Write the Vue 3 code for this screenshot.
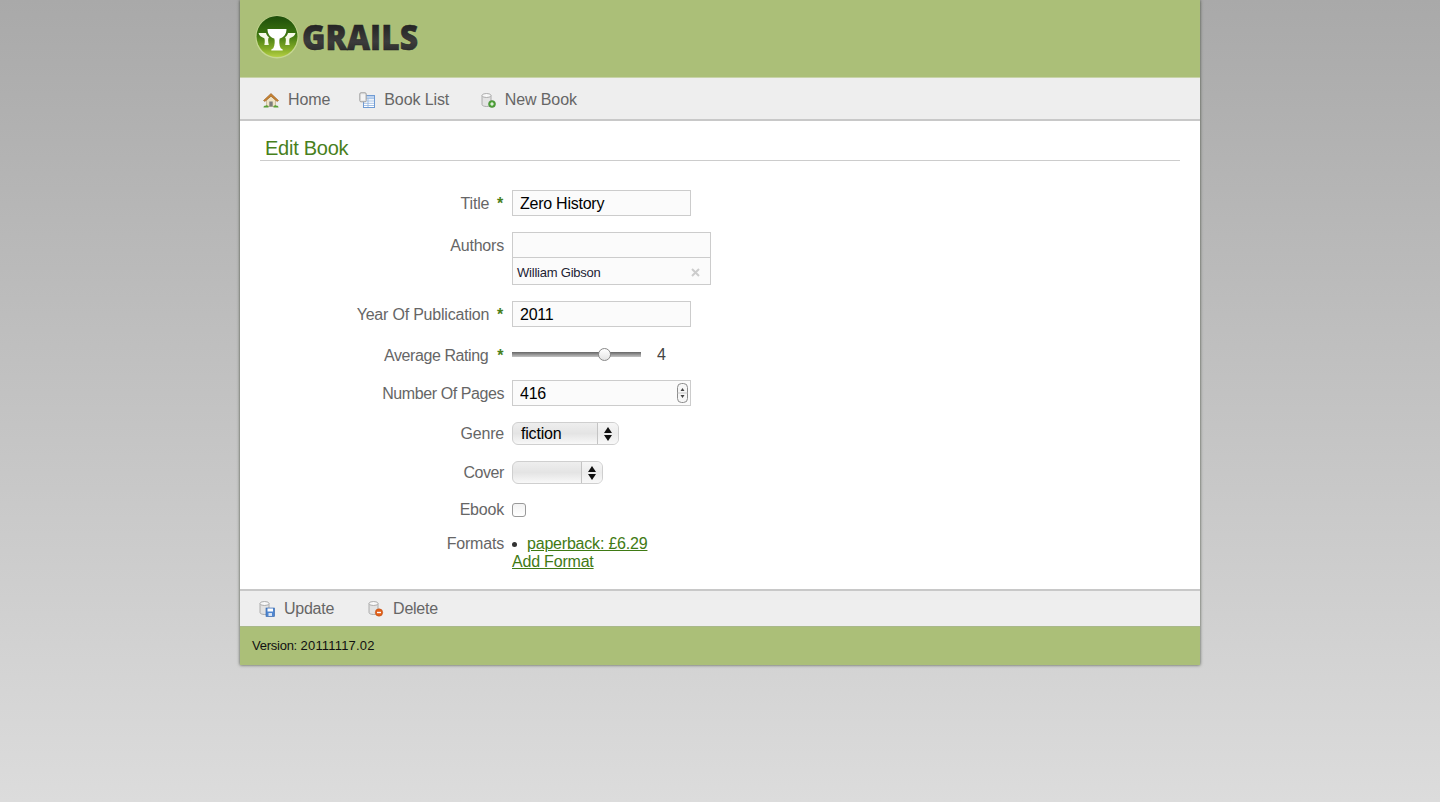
<template>
  <div class="page">
    <div class="sheet">
      <header class="masthead">
        <svg class="logo" width="190" height="44" viewBox="0 0 190 44" role="img" aria-label="Grails">
          <defs>
            <linearGradient id="ball" x1="0" y1="0" x2="0" y2="1">
              <stop offset="0" stop-color="#1d4d0a" />
              <stop offset="0.45" stop-color="#3c7410" />
              <stop offset="0.8" stop-color="#83ab26" />
              <stop offset="1" stop-color="#b4cf45" />
            </linearGradient>
            <linearGradient id="word" x1="0" y1="0" x2="0" y2="1">
              <stop offset="0" stop-color="#111" />
              <stop offset="0.6" stop-color="#3c3c3c" />
              <stop offset="1" stop-color="#1e1e1e" />
            </linearGradient>
          </defs>
          <circle cx="22" cy="22" r="21.500" fill="#c6d792" />
          <circle cx="22" cy="21.500" r="20.500" fill="url(#ball)" />
          <path d="M12.500 14h19c0 5-2.500 8.200-6.800 9.500-.7 2-.6 6.500 1 9.800l2 1.200v1H16.300v-1l2-1.200c1.600-3.300 1.700-7.800 1-9.800-4.300-1.300-6.800-4.500-6.800-9.500z" fill="#fff" />
          <path d="M3.500 18H11c.5 2 1.500 3.200 3 4.200l-.5.800c-.6 1-.4 4 .3 7H9.300c.7-3 .6-5.500 0-6.800-3-1-5.300-2.700-5.800-5.200z" fill="#f6f9e8" />
          <path d="M40.500 18H33c-.5 2-1.500 3.200-3 4.200l.5.800c.6 1 .4 4-.3 7h4.500c-.7-3-.6-5.500 0-6.800 3-1 5.300-2.700 5.800-5.200z" fill="#f6f9e8" />
          <text class="logo-word" x="47" y="35" textLength="116" lengthAdjust="spacingAndGlyphs" fill="url(#word)" stroke="#222" stroke-width=".5">GRAILS</text>
        </svg>
      </header>

      <nav class="bar nav-bar">
        <a v-for="item in navItems" :key="item.label" class="bar-link">
          <svg class="icon" width="16" height="16" viewBox="0 0 16 16">
            <template v-if="item.icon === 'home'">
              <path d="M3.500 8 8 4l4.500 4v6.500h-9z" fill="#efe3c6" stroke="#a8926a" stroke-width=".5" />
              <path d="M.5 8.500 8 1.500l7.500 7-1.300 1L8 4.200 1.800 9.500z" fill="#c9822f" stroke="#94602a" stroke-width=".6" />
              <rect x="6.300" y="9.500" width="3.400" height="5" fill="#7d7d7d" />
              <path d="M.5 15.500c0-1.500 1-2 2-1.800.6-.8 2-.6 3 .3v1.500zM15.500 15.500c0-1.500-1-2-2-1.800-.6-.8-2-.6-3 .3v1.500z" fill="#5aa038" />
            </template>
            <template v-else-if="item.icon === 'list'">
              <rect x="4.500" y="3.500" width="11" height="12" fill="#fff" stroke="#6f9bd4" />
              <rect x="5" y="4" width="10" height="2.500" fill="#bdd2ee" />
              <path d="M5 6.700h10M5 9h10M5 11.300h10M5 13.500h10M9 6.500v8.500" stroke="#8fb2de" stroke-width=".8" />
              <rect x=".8" y=".8" width="6.400" height="9" rx="1.200" fill="#e8e8e8" stroke="#a0a0a0" />
              <path d="M3 2.500v5.500M5 2.500v5.500" stroke="#fff" />
            </template>
            <template v-else>
              <path d="M2 3.500v9c0 1.200 2.200 2 4.500 2s4.500-.8 4.500-2v-9z" fill="#e3e3e3" stroke="#9c9c9c" stroke-width=".8" />
              <ellipse cx="6.500" cy="3.500" rx="4.500" ry="2" fill="#f8f8f8" stroke="#9c9c9c" stroke-width=".8" />
              <circle cx="12" cy="12" r="3.500" fill="#4fa33a" stroke="#3c7f2a" stroke-width=".5" />
              <path d="M10.200 12h3.600M12 10.200v3.600" stroke="#fff" stroke-width="1.200" />
            </template>
          </svg>
          <span>{{ item.label }}</span>
        </a>
      </nav>

      <main class="content">
        <h1 class="title">Edit Book</h1>

        <form class="book-form" @submit.prevent>
          <label class="field-label">Title <b class="req">*</b></label>
          <div><input class="text-input" type="text" value="Zero History" /></div>

          <label class="field-label">Authors</label>
          <div class="authors">
            <input class="authors-input" type="text" />
            <div class="author-chip">
              <span>William Gibson</span>
              <svg width="9" height="9" viewBox="0 0 9 9"><path d="M1 1l7 7M8 1 1 8" stroke="#ccc" stroke-width="2" /></svg>
            </div>
          </div>

          <label class="field-label">Year Of Publication <b class="req">*</b></label>
          <div><input class="text-input" type="text" value="2011" /></div>

          <label class="field-label tight rating-label">Average Rating <b class="req">*</b></label>
          <div class="rating">
            <div class="slider"><span class="knob"></span></div>
            <output class="rating-value">4</output>
          </div>

          <label class="field-label tight">Number Of Pages</label>
          <div class="number-wrap">
            <input class="text-input" type="text" value="416" />
            <span class="stepper">
              <svg width="11" height="20" viewBox="0 0 11 20">
                <rect x=".5" y=".5" width="10" height="19" rx="4" fill="#f6f6f6" stroke="#8c8c8c" />
                <path d="M.5 10h10" stroke="#c8c8c8" />
                <path d="M5.500 5 7.500 8h-4zM5.500 15l2-3h-4z" fill="#444" />
              </svg>
            </span>
          </div>

          <label class="field-label select-label">Genre</label>
          <div class="select-box genre">
            <span class="select-text">fiction</span>
            <span class="select-arrows"><i class="up"></i><i class="down"></i></span>
          </div>

          <label class="field-label select-label tight">Cover</label>
          <div class="select-box cover">
            <span class="select-text"></span>
            <span class="select-arrows"><i class="up"></i><i class="down"></i></span>
          </div>

          <label class="field-label ebook-label">Ebook</label>
          <div class="ebook"><span class="checkbox"></span></div>

          <label class="field-label formats-label">Formats</label>
          <div class="formats">
            <div class="format-item"><span class="dot"></span><a class="link">paperback: £6.29</a></div>
            <a class="link">Add Format</a>
          </div>
        </form>
      </main>

      <div class="bar action-bar">
        <a class="bar-link">
          <svg class="icon" width="16" height="16" viewBox="0 0 16 16">
            <path d="M1 2.500v9c0 1.200 2.200 2 4.500 2s4.500-.8 4.500-2v-9z" fill="#e3e3e3" stroke="#9c9c9c" stroke-width=".8" />
            <ellipse cx="5.500" cy="2.500" rx="4.500" ry="2" fill="#f8f8f8" stroke="#9c9c9c" stroke-width=".8" />
            <rect x="7" y="7" width="8.500" height="8.500" fill="#4f86d0" stroke="#2f62a8" stroke-width=".6" />
            <rect x="8.500" y="7.500" width="5.500" height="3" fill="#fff" />
            <rect x="9.500" y="12" width="3.500" height="3" fill="#d8e4f4" />
          </svg>
          <span>Update</span>
        </a>
        <a class="bar-link">
          <svg class="icon" width="16" height="16" viewBox="0 0 16 16">
            <path d="M1 2.500v9c0 1.200 2.200 2 4.500 2s4.500-.8 4.500-2v-9z" fill="#e3e3e3" stroke="#9c9c9c" stroke-width=".8" />
            <ellipse cx="5.500" cy="2.500" rx="4.500" ry="2" fill="#f8f8f8" stroke="#9c9c9c" stroke-width=".8" />
            <circle cx="11" cy="11.500" r="3.700" fill="#e2601a" stroke="#b84a10" stroke-width=".5" />
            <path d="M9 11.500h4" stroke="#fff" stroke-width="1.400" />
          </svg>
          <span>Delete</span>
        </a>
      </div>

      <footer class="foot"><span class="foot-label">Version:</span> <span class="foot-number">20111117.02</span></footer>
    </div>
  </div>
</template>

<script setup>
const navItems = [
  { label: 'Home', icon: 'home' },
  { label: 'Book List', icon: 'list' },
  { label: 'New Book', icon: 'add' }
]
</script>

<style>
html,
body {
  margin: 0;
  height: 100%;
}
</style>

<style scoped>
.page {
  min-height: 802px;
  background: linear-gradient(#a9a9a9, #dcdcdc);
  font-family: "Liberation Sans", Arial, sans-serif;
  color: #666;
  overflow: hidden;
}

.sheet {
  width: 960px;
  margin: 0 auto;
  background: #fff;
  box-shadow: 0 0 3px rgba(40, 50, 30, 0.8);
}

.masthead {
  height: 77px;
  box-sizing: border-box;
  padding: 15px 0 0 15px;
  background: #abbf78;
}

.logo {
  display: block;
  overflow: visible;
}

.logo-word {
  font-family: "Open Sans", sans-serif;
  font-weight: 800;
  font-size: 36px;
}

.bar {
  display: flex;
  align-items: center;
  background: #eee;
  font-size: 16px;
}

.nav-bar {
  height: 44px;
  box-sizing: border-box;
  padding: 2px 0 0 23px;
  gap: 29px;
  letter-spacing: -0.1px;
  border-top: 1px solid #c8d3a8;
  border-bottom: 2px solid #c8c8c8;
}

.nav-bar .bar-link:last-child {
  margin-left: 1.500px;
}

.action-bar {
  height: 37px;
  box-sizing: border-box;
  padding-left: 19px;
  gap: 34px;
  letter-spacing: -0.25px;
  border-top: 2px solid #c8c8c8;
}

.bar-link {
  display: flex;
  align-items: center;
  gap: 9px;
  color: #666;
}

.icon {
  flex: none;
}

.content {
  padding: 16px 20px 18px;
}

.title {
  margin: 0 0 29px;
  padding: 0 0 0 5px;
  font-size: 20px;
  line-height: 23px;
  font-weight: normal;
  letter-spacing: -0.25px;
  color: #48801c;
  border-bottom: 1px solid #ccc;
}

.book-form {
  display: grid;
  grid-template-columns: 244px 1fr;
  column-gap: 8px;
  row-gap: 16px;
  font-size: 16px;
  letter-spacing: -0.2px;
}

.field-label {
  height: 18px;
  box-sizing: border-box;
  padding-top: 4px;
  text-align: right;
  line-height: 20px;
}

.tight {
  letter-spacing: -0.42px;
}

.rating-label {
  padding-top: 3px;
}

.select-label {
  padding-top: 2px;
}

.ebook-label {
  padding-top: 1px;
  line-height: 18px;
}

.formats-label {
  padding-top: 0;
  line-height: 18px;
}

.req {
  display: inline-block;
  margin: 0 1px 0 3.500px;
  font-weight: bold;
  color: #48801c;
}

.tight .req {
  margin-left: 5px;
}

.text-input {
  display: block;
  width: 179px;
  height: 26px;
  box-sizing: border-box;
  padding: 2px 7px 0;
  border: 1px solid #ccc;
  border-radius: 0;
  outline: none;
  background: #fbfbfb;
  font: inherit;
  letter-spacing: -0.25px;
  color: #000;
}

.authors {
  width: 199px;
  box-sizing: border-box;
  border: 1px solid #ccc;
  background: #fbfbfb;
}

.authors-input {
  display: block;
  width: 100%;
  height: 25px;
  box-sizing: border-box;
  border: 0;
  border-bottom: 1px solid #ccc;
  outline: none;
  background: transparent;
}

.author-chip {
  display: flex;
  align-items: center;
  justify-content: space-between;
  height: 26px;
  padding: 2px 10px 0 4px;
  box-sizing: border-box;
  font-size: 13px;
  letter-spacing: -0.22px;
  color: #223;
}

.rating {
  display: flex;
  align-items: center;
  height: 21px;
  padding-top: 1px;
  box-sizing: border-box;
}

.slider {
  position: relative;
  width: 129px;
  height: 5px;
  background: linear-gradient(#666, #c4c4c4);
}

.knob {
  position: absolute;
  left: 86px;
  top: -4px;
  width: 11px;
  height: 11px;
  border: 1px solid #888;
  border-radius: 50%;
  background: linear-gradient(#fff, #e4e4e4);
}

.rating-value {
  margin: 2px 0 0 16px;
  color: #444;
}

.number-wrap {
  position: relative;
  width: 179px;
}

.stepper {
  position: absolute;
  right: 3px;
  top: 3px;
  line-height: 0;
}

.select-box {
  display: flex;
  height: 23px;
  box-sizing: border-box;
  align-items: stretch;
  border: 1px solid #cfcfcf;
  border-radius: 6px;
  background: linear-gradient(#eeeeee, #e4e4e4 50%, #f8f8f8);
  color: #000;
}

.genre {
  width: 107px;
}

.cover {
  width: 91px;
}

.select-text {
  flex: 1;
  padding-left: 8px;
  line-height: 21px;
}

.select-arrows {
  display: flex;
  flex-direction: column;
  align-items: center;
  justify-content: center;
  gap: 2px;
  width: 20px;
  border-left: 1px solid #c4c4c4;
  background: linear-gradient(#f6f6f6, #ececec 50%, #f8f8f8);
  border-radius: 0 5px 5px 0;
}

.up,
.down {
  width: 0;
  height: 0;
  border-left: 4px solid transparent;
  border-right: 4px solid transparent;
}

.up {
  border-bottom: 6px solid #111;
}

.down {
  border-top: 6px solid #111;
}

.ebook {
  height: 19px;
  display: flex;
  align-items: center;
  padding-top: 1px;
  box-sizing: border-box;
}

.checkbox {
  width: 14px;
  height: 14px;
  box-sizing: border-box;
  border: 1px solid #999;
  border-radius: 3px;
  background: linear-gradient(#f2f2f2, #fff);
}

.formats {
  line-height: 18px;
}

.format-item {
  display: flex;
  align-items: center;
}

.dot {
  width: 5px;
  height: 5px;
  margin-right: 10px;
  border-radius: 50%;
  background: #333;
}

.link {
  color: #3f7a14;
  text-decoration: underline;
}

.foot {
  height: 39px;
  padding-left: 12px;
  background: #abbf78;
  border-top: 1px solid #a8b88a;
  box-sizing: border-box;
  font-size: 13px;
  line-height: 38px;
  color: #111;
}

.foot-label {
  letter-spacing: -0.25px;
}

.foot-number {
  letter-spacing: 0.17px;
}
</style>
